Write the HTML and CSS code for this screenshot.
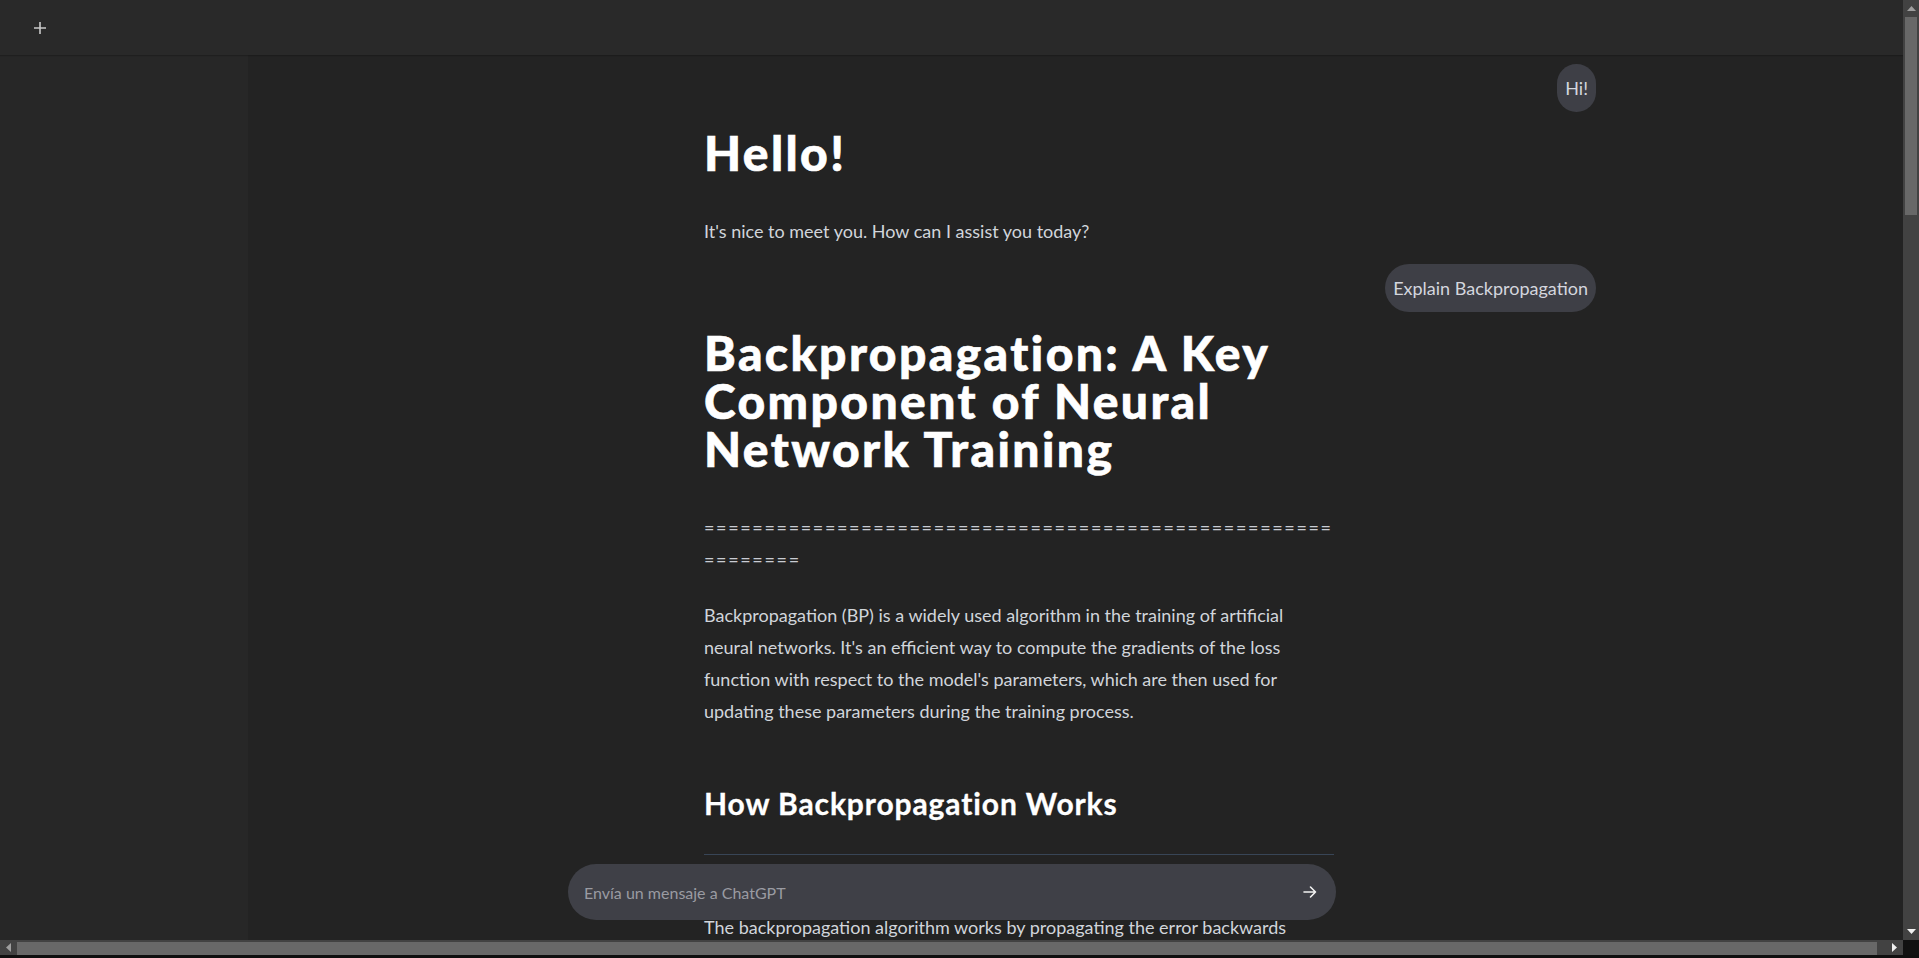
FILE: index.html
```html
<!DOCTYPE html>
<html lang="en">
<head>
<meta charset="utf-8">
<title>Chat</title>
<link rel="stylesheet" href="styles.css">
</head>
<body>
<div class="window">
  <div class="viewport">
    <header class="topbar">
      <button class="new-chat" aria-label="New chat">
        <svg width="14" height="14" viewBox="0 0 14 14"><path d="M7 1v12M1 7h12" stroke="#c8c8c8" stroke-width="1.6" fill="none"/></svg>
      </button>
    </header>
    <div class="layout">
      <aside class="sidebar"></aside>
      <main class="main">
        <div class="thread">
          <div class="msg user"><div class="bubble">Hi!</div></div>
          <div class="msg bot">
            <div class="prose">
              <h1>Hello!</h1>
              <p>It's nice to meet you. How can I assist you today?</p>
            </div>
          </div>
          <div class="msg user"><div class="bubble">Explain Backpropagation</div></div>
          <div class="msg bot">
            <div class="prose">
              <h1>Backpropagation: A Key Component of Neural Network Training</h1>
              <p class="rule-text">============================================================</p>
              <p>Backpropagation (BP) is a widely used algorithm in the training of artificial neural networks. It's an efficient way to compute the gradients of the loss function with respect to the model's parameters, which are then used for updating these parameters during the training process.</p>
              <h2>How Backpropagation Works</h2>
              <hr>
              <p>The backpropagation algorithm works by propagating the error backwards through the network, layer by layer, computing the gradient of the loss with respect to each weight.</p>
            </div>
          </div>
        </div>
      </main>
    </div>
    <form class="composer">
      <input class="composer-input" type="text" placeholder="Envía un mensaje a ChatGPT">
      <button class="send" type="button" aria-label="Send">
        <svg width="16" height="16" viewBox="0 0 16 16"><path d="M2 8h11.5M8.5 3l5 5-5 5" stroke="#f2f2f2" stroke-width="1.6" fill="none" stroke-linecap="round" stroke-linejoin="round"/></svg>
      </button>
    </form>
  </div>
  <div class="vscroll">
    <div class="arrow-btn"><svg width="9" height="5" viewBox="0 0 9 5"><path d="M0 5L4.5 0 9 5z" fill="#9e9e9e"/></svg></div>
    <div class="vtrack"><div class="vthumb"></div></div>
    <div class="arrow-btn"><svg width="9" height="5" viewBox="0 0 9 5"><path d="M0 0L4.5 5 9 0z" fill="#f0f0f0"/></svg></div>
  </div>
  <div class="hscroll">
    <div class="arrow-btn h"><svg width="5" height="9" viewBox="0 0 5 9"><path d="M5 0L0 4.5 5 9z" fill="#9e9e9e"/></svg></div>
    <div class="htrack"><div class="hthumb"></div></div>
    <div class="arrow-btn h"><svg width="5" height="9" viewBox="0 0 5 9"><path d="M0 0L5 4.5 0 9z" fill="#f0f0f0"/></svg></div>
  </div>
  <div class="corner"></div>
</div>
</body>
</html>
```

FILE: styles.css
```css
* { box-sizing: border-box; }

html, body {
  margin: 0;
  padding: 0;
  height: 100%;
  overflow: hidden;
}

body {
  background: #0f0f0f;
  font-family: "Lato", "Noto Sans", sans-serif;
  color: #d1d5db;
}

.window {
  display: grid;
  grid-template-columns: 1fr 16px;
  grid-template-rows: 940px 15px;
  height: 955px;
}

.viewport {
  position: relative;
  overflow: hidden;
  display: flex;
  flex-direction: column;
  background: #232323;
}

.topbar {
  flex: 0 0 55px;
  height: 55px;
  background: #292929;
  box-shadow: 0 1px 1px rgba(0, 0, 0, 0.2);
  display: flex;
  align-items: center;
  padding-left: 32px;
  position: relative;
  z-index: 1;
}

.new-chat {
  width: 16px;
  height: 16px;
  padding: 0;
  margin: 0;
  border: 0;
  background: transparent;
  display: flex;
  align-items: center;
  justify-content: center;
}

.layout {
  flex: 1;
  display: flex;
  min-height: 0;
}

.sidebar {
  flex: 0 0 248px;
  background: #272727;
}

.main {
  flex: 1;
  background: #232323;
  min-width: 0;
}

.thread {
  padding: 9px 307px 0 456px;
  display: flex;
  flex-direction: column;
  gap: 17px;
}

.msg.user {
  display: flex;
  justify-content: flex-end;
}

.bubble {
  background: #3e3f46;
  color: #d4d6de;
  border-radius: 24px;
  padding: 12px 8px;
  font-size: 18px;
  line-height: 24px;
}

.prose {
  max-width: 630px;
  font-size: 18px;
  line-height: 32px;
}

.prose h1 {
  margin: 0 0 38px;
  font-size: 48px;
  line-height: 48px;
  font-weight: 900;
  letter-spacing: 0.05em;
  -webkit-text-stroke: 0.6px #ffffff;
  color: #ffffff;
}

.prose p {
  margin: 0 0 24px;
}

.prose p:last-child {
  margin-bottom: 0;
}

.prose .rule-text {
  word-break: break-all;
  letter-spacing: 1.65px;
  color: #c9ccd3;
}

.prose h2 {
  margin: 56px 0 31px;
  font-size: 30px;
  line-height: 40px;
  font-weight: 700;
  letter-spacing: 0.03em;
  -webkit-text-stroke: 0.3px #ffffff;
  color: #ffffff;
}

.prose hr {
  border: 0;
  border-top: 1px solid #384556;
  margin: 0 0 56px;
}

.composer {
  position: absolute;
  left: 568px;
  bottom: 20px;
  width: 768px;
  height: 56px;
  margin: 0;
  background: #3f4047;
  border-radius: 28px;
  display: flex;
  align-items: center;
  padding: 0 18px 0 16px;
}

.composer-input {
  flex: 1;
  border: 0;
  outline: none;
  background: transparent;
  font-family: inherit;
  font-size: 16px;
  color: #e5e5e5;
  padding: 0;
}

.composer-input::placeholder {
  color: #9a9ba2;
}

.send {
  border: 0;
  background: transparent;
  padding: 0;
  width: 16px;
  height: 16px;
  display: flex;
  align-items: center;
  justify-content: center;
}

.vscroll {
  background: #424242;
  display: flex;
  flex-direction: column;
}

.arrow-btn {
  flex: 0 0 17px;
  height: 17px;
  display: flex;
  align-items: center;
  justify-content: center;
}

.arrow-btn.h {
  width: 17px;
  height: auto;
}

.vtrack {
  flex: 1;
  padding: 0 2px;
}

.vthumb {
  height: 198px;
  background: #686868;
}

.hscroll {
  background: #424242;
  display: flex;
}

.htrack {
  flex: 1;
  padding-top: 2px;
}

.hthumb {
  height: 13px;
  width: 1860px;
  background: #686868;
}

.corner {
  background: #111111;
}
```
